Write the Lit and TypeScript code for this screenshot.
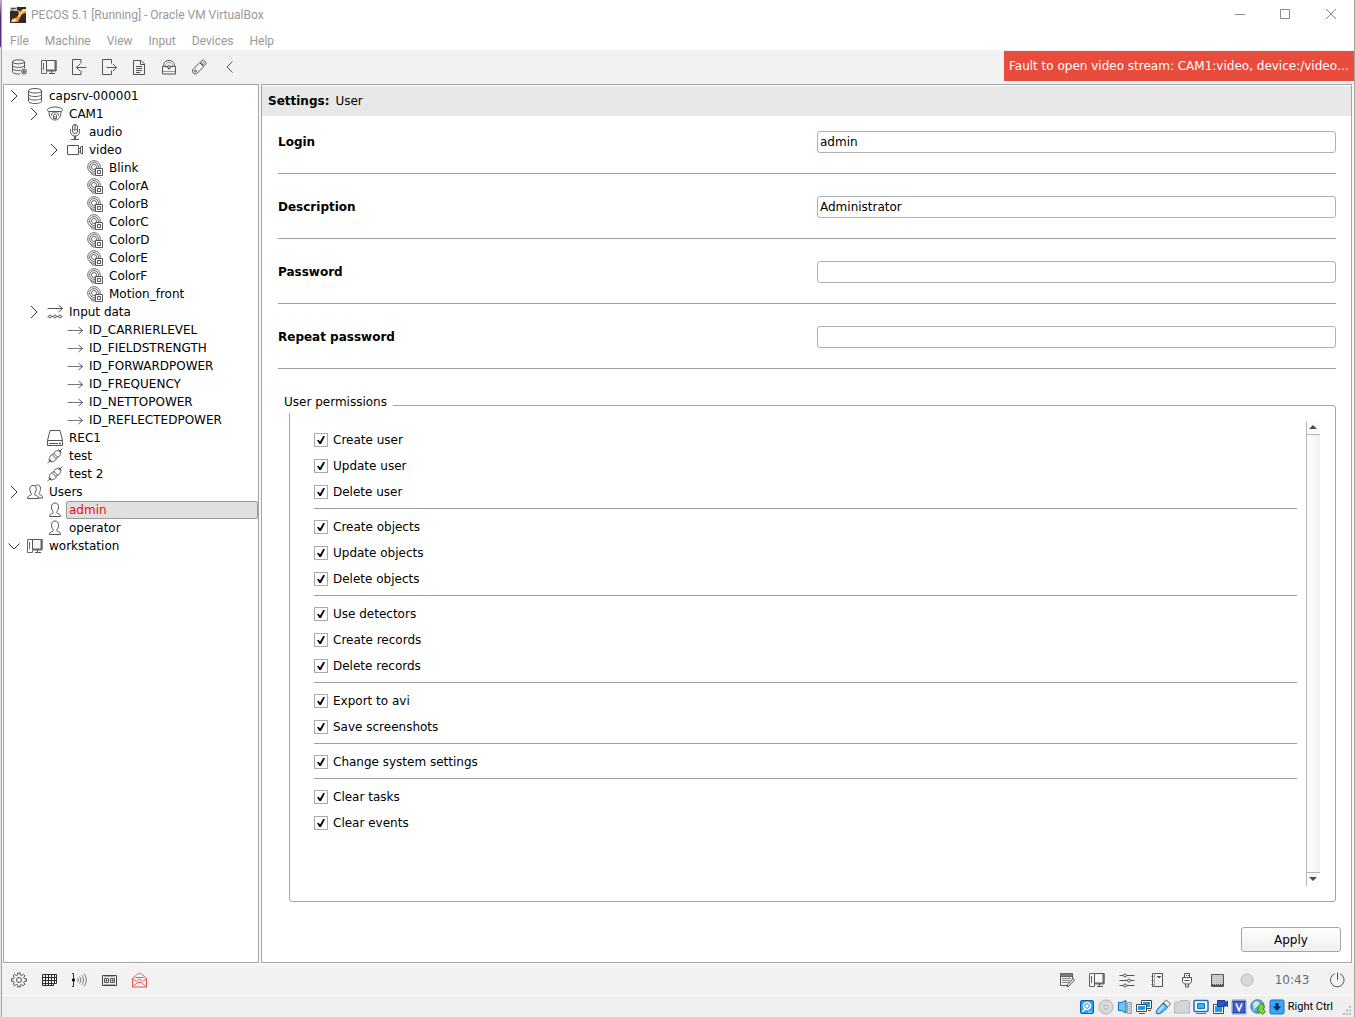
import { LitElement, html, svg, css } from "lit";
import { customElement, property } from "lit/decorators.js";

const ICONS: Record<string, unknown> = {
  server: svg`<ellipse cx="8" cy="2.800" rx="6.500" ry="2.300"/><path d="M1.500 2.800v10.400c0 1.400 2.900 2.300 6.500 2.300s6.500-.9 6.500-2.300V2.800M1.500 6.200C1.500 7.600 4.400 8.500 8 8.500s6.500-.9 6.500-2.300M1.500 9.700C1.500 11.100 4.400 12 8 12s6.500-.9 6.500-2.300"/>`,
  serverAdd: svg`<ellipse cx="7.500" cy="2.800" rx="6" ry="2"/><path d="M1.500 2.800v10c0 1.300 2.500 2.200 6 2.200h1.500M13.500 3v6M1.500 6.200c0 1.300 2.700 2.200 6 2.200s6-.9 6-2.200M1.500 9.400c0 1.300 2.700 2.200 6 2.200h2"/><circle cx="13" cy="12.500" r="2.500"/><circle cx="13" cy="12.500" r="1" fill="#888"/>`,
  station: svg`<path d="M5.500 1.500h-5v13h5v-2M2.500 4v7" stroke="#666"/><path d="M5.500 1.500h9.500v10H5.500z" fill="#f6f6f6"/><path d="M14.500 1v11M5 11.500h10" stroke="#666" stroke-width="2"/><path d="M10.500 12v2.500M8 14.500h6"/>`,
  login: svg`<path d="M10 4.500v-4H1.500v15H10v-4M15.500 8.500H5.500M9 5L5.500 8.500 9 12"/>`,
  logout: svg`<path d="M10.500 4.500v-4h-9v15h9v-4M5.500 8.500h10M12 5l3.500 3.500L12 12"/>`,
  page: svg`<path d="M2.500 1.500H10l3.500 3.500v10.500h-11zM9.500 1.500v4h4M5 7.500h6M5 9.500h6M5 11.500h6M5 13.500h4"/>`,
  lock: svg`<path d="M2.500 7C2.500 3 5 1.500 8 1.500S13.500 3 13.500 7M1.500 7.500h13v7.500h-13z"/><path d="M4.500 7C4.500 4.500 6 3.500 8 3.500s3.500 1 3.500 3.500M2 12.500h12" stroke="#999"/><circle cx="8" cy="8" r="1.500" fill="#fff"/><path d="M8 8v2.500"/>`,
  usb: svg`<path d="M8.700 3.700l4 4-6.200 6.300c-1.300 1.300-3.300 1-4.200 0s-1.200-2.800 0-4zM9.500 3l2-2c1-.5 3.500 2 3.700 3.500l-2.200 2.200z"/><circle cx="4.500" cy="12" r="1"/><path d="M12 3l1.500 1.500M10.500 4.500l1.500 1.500"/>`,
  back: svg`<path d="M11.500 2.500L6 8l5.500 5.500"/>`,
  dome: svg`<path d="M.5 3.500C2 1.500 5 1 8 1s6 .5 7.500 2.500c0 1.200-.5 2-1.500 2H2c-1 0-1.500-.8-1.500-2zM2 5.500c0 5 2 8.500 6 8.500s6-3.500 6-8.500"/><path d="M4.500 9.500C4.500 7 6 6 8 6s3.500 1 3.500 3.500M6.500 12.500v-3c0-2 3-2 3 0v3zM8 10v1.500"/>`,
  mic: svg`<rect x="5.500" y=".5" width="5" height="9" rx="2.500"/><path d="M8 1v6M3.500 5v2.500c0 3 1.800 4.500 4.500 4.500s4.500-1.500 4.500-4.500V5M7.500 12v3M8.500 12v3M4 15.500h8"/><path d="M5.500 5.500h5" stroke="#888"/>`,
  camera: svg`<path d="M.5 3.500h11v9H.5zM11.500 7l2-1M11.500 9.500l2 1M13.500 5l2-1v8l-2-1z"/>`,
  detector: svg`<g stroke="#666"><circle cx="7" cy="7" r="6.300"/><circle cx="7" cy="7" r="4.400"/><circle cx="7" cy="7" r="2.500"/><path d="M3 11.500l2.500 3.500h3"/></g><path d="M8.500 8.500h7v7h-7z" fill="#fff"/><path d="M10.500 10.500h3v3h-3z"/>`,
  inputs: svg`<path d="M.5 4.500h15M11.500 1l4 3.500-4 3.500"/><circle cx="3" cy="12.500" r="1.400"/><circle cx="8" cy="12.500" r="1.400"/><circle cx="13" cy="12.500" r="1.400"/><path d="M.5 12.500h1M4.500 12.500h2M9.500 12.500h2M14.500 12.500h1"/>`,
  arrow: svg`<path d="M.5 8.500h15" stroke="#777"/><path d="M11.500 5l4 3.500-4 3.500"/>`,
  drive: svg`<path d="M3 .5h10l2.500 10v5H.5v-5zM.5 10.500h15M2 13.500h9"/><path d="M12 13.500h2" stroke-width="1.500"/>`,
  plug: svg`<path d="M.5 15l3-2.500M12.500 3.500l3-3M3.500 12.500c-2-2.500-.5-4.500 1.500-6l4.500 4.500c-2 2.500-4 3.500-6 1.500zM12.500 3.500c2 2.500.5 4-1.500 6L6.500 5c2-2 4-3.500 6-1.500zM5.500 7l2-2M9 10.500l2-2M11.500 1.500l3 3M1.500 11.500l3 3"/>`,
  users: svg`<path d="M.5 14.500c0-2.800 1.500-2.500 3.500-3.500.6-.4.500-1.200 0-1.900C3 7.500 2.800 6.500 2.800 4.800 2.800 2.500 4.200 1.500 6 1.500s3.200 1 3.200 3.300c0 1.700-.2 2.700-1.200 4.300-.5.700-.6 1.500 0 1.900 2 1 3.500.7 3.500 3.500z"/><path d="M8 2.200c.7-.8 1.500-1.200 2.500-1.200 1.800 0 3 1.200 3 3.300 0 1.700-.2 2.700-1.200 4.300-.5.700-.4 1.500.2 1.900 1.800.8 3 .7 3 3.500H12"/>`,
  user: svg`<path d="M2.500 14.500c0-2.500 1.200-2.200 3.400-3.300.6-.4.500-1.200 0-1.900C4.700 7.700 4.500 6.500 4.500 4.800c0-2.500 1.500-3.800 3.500-3.800s3.500 1.300 3.500 3.800c0 1.700-.2 2.900-1.400 4.500-.5.700-.6 1.500 0 1.900 2.200 1.100 3.400.8 3.400 3.300z"/>`,
  gear: svg`<path d="M6.700 1h2.600v2l1.500.6 1.500-1.400 1.700 1.800-1.300 1.400.6 1.300H15.500v2.600h-2.200l-.6 1.300 1.300 1.500-1.700 1.700-1.500-1.300-1.500.6V15H6.700v-1.900l-1.500-.6-1.500 1.300L2 12.100l1.300-1.500-.6-1.300H.5V6.700h2.200l.6-1.300L2 4l1.700-1.800 1.500 1.400L6.700 3z"/><circle cx="8" cy="8" r="2.500"/>`,
  grid: svg`<path d="M1.500 2.500h14v9h-3v2h-11zM1.500 5.500h14M1.500 8.500h14M1.500 11.500h11M4.500 2.500v11M7.500 2.500v11M10.500 2.500v11M13.500 2.500v9" stroke="#2c2c2c"/>`,
  sound: svg`<path d="M1 1.500h1.500v13H1" stroke="#333"/><path d="M1.500 7h2v2h-2z" fill="#111" stroke="#111"/><g stroke="#777"><path d="M6.500 5.800c1 1.400 1 3 0 4.400M8.500 4.500c1.700 2.200 1.700 4.800 0 7M10.800 3.200c2.200 3 2.200 6.600 0 9.600M13 2c3 3.700 3 8.300 0 12"/></g>`,
  tape: svg`<path d="M1.500 3.500h14v10h-14z" stroke="#444"/><path d="M3 4.500h11M3 12.500h11" stroke="#aaa"/><path d="M3.500 6.500h4v4h-4zM9.500 6.500h4v4h-4z"/><path d="M5 8h1v1H5zM11 8h1v1h-1z" stroke="#333"/>`,
  mail: svg`<g stroke="#ea5550"><path d="M1.500 6.500l5-4.500c1.300-1 2.700-1 4 0l5 4.500v8.500h-14zM1.500 6.500l4 3M15.500 6.500l-4 3M1.500 15l5-4.500h4l5 4.500M4.500 5.500h8M6 9l2.500-2L11 9"/></g>`,
  notes: svg`<path d="M9 13.500H1.500v-12h12v5M1.500 4.500h12"/><path d="M3 6.500h9M3 8.500h8M3 10.500h7" stroke="#888"/><path d="M2 2h11v2H2z" fill="#888" stroke="#777"/><path d="M14 6.500l1.500 1.500-5.500 6-2 .8.600-2z"/>`,
  sliders: svg`<path d="M.5 3.500h4M7.500 3.500h8M.5 8.500h8M11.500 8.500h4M.5 13.500h4M7.500 13.500h8"/><circle cx="6" cy="3.500" r="1.500"/><circle cx="10" cy="8.500" r="1.500"/><circle cx="6" cy="13.500" r="1.500"/>`,
  book: svg`<path d="M3.500 1.500h10v13h-10z"/><path d="M5.500 1.500v13" stroke="#aaa"/><path d="M2.500 4.500h2M2.500 8.500h2M2.500 12.500h2M8 4.500h4M9 5.500h2"/>`,
  port: svg`<path d="M5.500 5.500v-4h5v4M7.500 3v1M9.500 3v1M3.500 5.500h9v4c0 1.500-1.500 2-2.500 2.500H6c-1-.5-2.500-1-2.500-2.500zM6.500 12v3h3v-3M5.500 8.500h5"/>`,
  matte: svg`<path d="M2.500 2.500h12v12h-12z" fill="#d0d0d0" stroke="#555"/><path d="M3 4.500h11M3 6.500h11M3 8.500h11M3 10.500h11" stroke="#bbb" stroke-dasharray="1 1"/><path d="M3 12.500h11" stroke="#444" stroke-dasharray="1 1"/><path d="M3 13.500h11" stroke="#555"/>`,
  dot: svg`<circle cx="8" cy="8" r="6" fill="#d8d8d8" stroke="#b8b8b8"/>`,
  power: svg`<path d="M5.500 1.800a6.800 6.800 0 1 0 5.500 0M8.500.5V8"/>`,
  vmDisk: svg`<rect x="1.500" y="1.500" width="13" height="13" rx="1.500" fill="#2a9df0" stroke="#0b5fae"/><circle cx="8" cy="7" r="4.300" fill="#fff" stroke="none"/><circle cx="8" cy="7" r="2.300" fill="#fff" stroke="#1c83d8"/><path d="M3.500 12.800L7 9" stroke="#fff" stroke-width="1.500"/><path d="M9 13h4" stroke="#cfeaff"/>`,
  vmDisc: svg`<circle cx="8" cy="8" r="7" fill="#dadada" stroke="#b2b2b2"/><circle cx="8" cy="8" r="2" fill="#eee" stroke="#aaa"/>`,
  vmAudio: svg`<path d="M1.500 3.500h3l4.500-2v12.500l-4.500-2.500h-3z" fill="#6cc6f8" stroke="#0f6cb8"/><path d="M10.500 3.500h4v11h-4z" fill="#d0d6da" stroke="#98a2a8"/><path d="M12.500 5v8" stroke="#98a2a8" stroke-dasharray="1 1"/>`,
  vmNet: svg`<path d="M5.500 1.500h10v8h-10z" fill="#fff" stroke="#444"/><path d="M7 3h7v5H7z" fill="#1a9af0" stroke="none"/><path d="M.5 5.500h10v7H.5z" fill="#fff" stroke="#444"/><path d="M2 7h7v4H2z" fill="#1a9af0" stroke="none"/><path d="M3 14.500h6M12 11.500h3" stroke="#555"/>`,
  vmUsb: svg`<path d="M1.500 14.500c-1-2 .5-4 2.500-6l4-4.500 4.500 4.500-4.500 4c-2 2-5 3-6.500 2z" fill="#66c0f8" stroke="#0f6cb8"/><path d="M3 13l5.500-6" stroke="#c8ebff" stroke-width="1.500"/><path d="M8.500 3.500l3-2.500L15.500 5l-3 3z" fill="#eee" stroke="#666"/>`,
  vmFolder: svg`<path d="M.5 4.500l1-1.500h4l1-1.500h7.500l1.500 1.500v11H.5z" fill="#d6d6d6" stroke="#b6b6b6"/>`,
  vmDisplay: svg`<rect x="1" y="1.500" width="14" height="11" rx="1" fill="#fff" stroke="#1273c4" stroke-width="1.500"/><path d="M4.500 4.500h7v5h-7z" fill="#3cb0f5" stroke="#1273c4"/><path d="M3 14.500h10" stroke="#4a7a9a"/>`,
  vmRecord: svg`<path d="M1.500 5.500h10v9h-10z" fill="#fff" stroke="#444"/><path d="M3 7h7v6H3z" fill="#1a9af0" stroke="none"/><path d="M5.500 1.500h7.500v6H5.500zM13 4l2.500-2v5.500L13 6" fill="#2e56c0" stroke="#1d3f98"/>`,
  vmCpu: svg`<rect x="1.500" y="1.500" width="13" height="13" fill="none" stroke="#2442a8" stroke-width="2" stroke-dasharray="1 1"/><rect x="2.500" y="2.500" width="11" height="11" fill="#3f62d4" stroke="#2442a8"/><path d="M5 4.500l3 7 3-7" stroke="#fff" stroke-width="1.600"/>`,
  vmMouse: svg`<circle cx="7.500" cy="7.500" r="6.800" fill="#3ba7ef" stroke="#5f7f98"/><path d="M3 5c2-3 5-3 6-1s-1 3-3 4-2 4-2 4" fill="#c9e9fb" stroke="#c9e9fb"/><path d="M8.500 7l3-3 3 4-1.500 1.500 2.500 3-3 3-3-3L8 14z" fill="#7ad431" stroke="#3f8c1c"/>`,
  vmKey: svg`<rect x="1" y="1" width="14" height="14" rx="1.500" fill="#3aa8f4" stroke="#1273c4"/><path d="M8 4v4" stroke="#04284e" stroke-width="3"/><path d="M4 7.500h8L8 12z" fill="#04284e" stroke="none"/>`,
};

@customElement("ui-icon")
export class UiIcon extends LitElement {
  static styles = css`
    :host { display: block; width: 16px; height: 16px; flex: none; }
    .glyph { display: block; width: 16px; height: 16px; fill: none; stroke: #555; stroke-width: 1; }
  `;
  @property() name = "";
  render() {
    return html`<svg class="glyph" viewBox="0 0 16 16" aria-hidden="true">${ICONS[this.name]}</svg>`;
  }
}

interface TreeNode { level: number; icon: string; label: string; toggle?: "closed" | "open"; selected?: boolean; }

const leaf = (level: number, icon: string, labels: string[]): TreeNode[] =>
  labels.map((label) => ({ level, icon, label }));

const TREE: TreeNode[] = [
  { level: 0, icon: "server", label: "capsrv-000001", toggle: "closed" },
  { level: 1, icon: "dome", label: "CAM1", toggle: "closed" },
  { level: 2, icon: "mic", label: "audio" },
  { level: 2, icon: "camera", label: "video", toggle: "closed" },
  ...leaf(3, "detector", ["Blink", "ColorA", "ColorB", "ColorC", "ColorD", "ColorE", "ColorF", "Motion_front"]),
  { level: 1, icon: "inputs", label: "Input data", toggle: "closed" },
  ...leaf(2, "arrow", ["ID_CARRIERLEVEL", "ID_FIELDSTRENGTH", "ID_FORWARDPOWER", "ID_FREQUENCY", "ID_NETTOPOWER", "ID_REFLECTEDPOWER"]),
  { level: 1, icon: "drive", label: "REC1" },
  ...leaf(1, "plug", ["test", "test 2"]),
  { level: 0, icon: "users", label: "Users", toggle: "closed" },
  { level: 1, icon: "user", label: "admin", selected: true },
  { level: 1, icon: "user", label: "operator" },
  { level: 0, icon: "station", label: "workstation", toggle: "open" },
];

const FIELDS = [
  { id: "login", label: "Login", value: "admin", type: "text" },
  { id: "description", label: "Description", value: "Administrator", type: "text" },
  { id: "password", label: "Password", value: "", type: "password" },
  { id: "repeat", label: "Repeat password", value: "", type: "password" },
];

const PERMISSIONS = [
  ["Create user", "Update user", "Delete user"],
  ["Create objects", "Update objects", "Delete objects"],
  ["Use detectors", "Create records", "Delete records"],
  ["Export to avi", "Save screenshots"],
  ["Change system settings"],
  ["Clear tasks", "Clear events"],
];

const MENUS = ["File", "Machine", "View", "Input", "Devices", "Help"];
const TOOLS = [
  ["serverAdd", "Add server"], ["station", "Workstation"], ["login", "Log in"], ["logout", "Log out"],
  ["page", "Log"], ["lock", "Lock"], ["usb", "Removable drive"], ["back", "Collapse"],
];
const BOTTOM_LEFT = [["gear", "Settings"], ["grid", "Layout"], ["sound", "Audio"], ["tape", "Records"], ["mail", "Events"]];
const BOTTOM_RIGHT = [
  ["notes", "Tasks"], ["station", "Displays"], ["sliders", "Adjust"], ["book", "Journal"],
  ["port", "Devices"], ["matte", "Keyboard"], ["dot", "Status"],
];
const VM_ICONS = ["vmDisk", "vmDisc", "vmAudio", "vmNet", "vmUsb", "vmFolder", "vmDisplay", "vmRecord", "vmCpu", "vmMouse", "vmKey"];

@customElement("object-tree")
export class ObjectTree extends LitElement {
  static styles = css`
    :host { display: block; box-sizing: border-box; border: 1px solid #a5a5a5; background: #fff; padding-top: 2px; }
    .row { display: flex; align-items: center; height: 18px; }
    .toggle { display: grid; place-items: center; width: 20px; height: 18px; margin-right: 3px; padding: 0; border: 0; background: none; flex: none; }
    .chevron { width: 12px; height: 14px; fill: none; stroke: #333; }
    .label { box-sizing: border-box; flex: 1; height: 18px; line-height: 16px; margin-left: 3px; padding-left: 2px; border: 1px solid transparent; white-space: nowrap; }
    .selected .label { background: #e0e0e0; border-color: #999; border-radius: 2px; color: #e80c10; }
  `;
  render() {
    return html`<div role="tree" aria-label="Objects">
      ${TREE.map((n) => html`
        <div class="row ${n.selected ? "selected" : ""}" role="treeitem" aria-level=${n.level + 1}
          aria-selected=${n.selected ? "true" : "false"} style="padding-left:${n.level * 20}px">
          ${n.toggle
            ? html`<button class="toggle" aria-label="Toggle ${n.label}">
                <svg class="chevron" viewBox="0 0 12 14">
                  <path d=${n.toggle === "open" ? "M.5 4.500L6 10l5.500-5.500" : "M3 1L9 7l-6 6"} /></svg></button>`
            : html`<span class="toggle"></span>`}
          <ui-icon name=${n.icon}></ui-icon>
          <span class="label">${n.label}</span>
        </div>`)}
    </div>`;
  }
}

@customElement("user-settings")
export class UserSettings extends LitElement {
  static styles = css`
    :host { display: flex; flex-direction: column; box-sizing: border-box; border: 1px solid #a5a5a5; background: #fff; min-width: 0; }
    .heading { display: flex; gap: 6px; margin: 1px 0 0; padding-left: 6px; line-height: 30px; background: #e8e8e8; font-size: 12px; font-weight: normal; }
    .body { display: flex; flex-direction: column; flex: 1; padding: 15px 15px 25px 16px; }
    .field { display: grid; grid-template-columns: 1fr 1fr; column-gap: 20px; align-items: center; padding-bottom: 20px; border-bottom: 1px solid #a0a0a0; }
    .field + .field { margin-top: 22px; }
    .name { font-weight: bold; }
    .text { box-sizing: border-box; width: 100%; height: 22px; margin: 0; padding: 0 2px; border: 1px solid #b0b0b0; border-radius: 3px; background: #fff; font: inherit; color: #000; outline: none; }
    .perms { display: flex; flex-direction: column; flex: 1; margin: 28px 0 0 11px; padding: 8px 15px 15px 24px; border: 1px solid #a5a5a5; border-radius: 3px; min-width: 0; }
    .legend { margin-left: -30px; padding: 0 6px 6px 0; line-height: 10px; background: #fff; }
    .area { display: flex; flex: 1; gap: 9px; }
    .list { flex: 1; padding-top: 6px; }
    .group { padding-bottom: 3px; border-bottom: 1px solid #a0a0a0; margin-bottom: 5px; }
    .group:last-child { border: 0; margin: 0; }
    .perm { display: flex; align-items: center; gap: 5px; height: 26px; width: max-content; }
    .check { appearance: none; display: grid; place-items: center; box-sizing: border-box; width: 14px; height: 14px; margin: 0; border: 1px solid #aaa; background: #fff; }
    .check:checked::before { content: ""; width: 8px; height: 8px; background: #000; clip-path: polygon(0 52%, 18% 46%, 38% 70%, 78% 0, 100% 4%, 50% 100%, 30% 100%); }
    .scroll { display: flex; flex-direction: column; justify-content: space-between; width: 14px; box-sizing: border-box; border-left: 1px solid #b4b4b4; background: linear-gradient(90deg, #fff, #f0f0f0); }
    .step { display: grid; place-items: center; height: 14px; padding: 0; border: 0 solid #b4b4b4; background: #fbfbfb; }
    .up { border-bottom-width: 1px; }
    .down { border-top-width: 1px; }
    .tri { width: 9px; height: 5px; fill: #4c4c4c; }
    .actions { display: flex; justify-content: flex-end; padding: 0 10px 10px; }
    .apply { width: 100px; height: 25px; padding: 0; border: 1px solid #a5a5a5; border-radius: 3px; background: linear-gradient(#fff, #efefef); font: inherit; color: #000; }
  `;
  render() {
    return html`
      <h1 class="heading"><b>Settings:</b><span>User</span></h1>
      <form class="body" @submit=${(e: Event) => e.preventDefault()}>
        ${FIELDS.map((f) => html`<div class="field">
          <label class="name" for=${f.id}>${f.label}</label>
          <input class="text" id=${f.id} type=${f.type} .value=${f.value} autocomplete="off" />
        </div>`)}
        <fieldset class="perms">
          <legend class="legend">User permissions</legend>
          <div class="area">
            <div class="list">
              ${PERMISSIONS.map((g) => html`<div class="group">
                ${g.map((p) => html`<label class="perm"><input class="check" type="checkbox" checked />${p}</label>`)}
              </div>`)}
            </div>
            <div class="scroll">
              <button class="step up" type="button" aria-label="Scroll up"><svg class="tri" viewBox="0 0 9 5"><path d="M0 4l4-4 4 4z"/></svg></button>
              <button class="step down" type="button" aria-label="Scroll down"><svg class="tri" viewBox="0 0 9 5"><path d="M0 0l4 4 4-4z"/></svg></button>
            </div>
          </div>
        </fieldset>
      </form>
      <div class="actions"><button class="apply" type="button">Apply</button></div>`;
  }
}

@customElement("app-root")
export class AppRoot extends LitElement {
  static styles = css`
    :host { display: block; font: 12px/16px "DejaVu Sans", sans-serif; color: #000; background: linear-gradient(#c8b8d8 0, #5a2780 16px, #5a2780 46px, #e4e4ea 48px, #e4e4ea 100%); padding-left: 1px; }
    .window { display: flex; flex-direction: column; box-sizing: border-box; min-height: 100vh; border: solid #a5a5a5; border-width: 0 1px; background: #f8f8f8; }
    .title { display: flex; align-items: center; height: 29px; padding-left: 8px; background: #fff; font: 12px/16px Roboto, sans-serif; color: #999; }
    .logo { width: 16px; height: 16px; margin-right: 5px; }
    .caption { flex: 1; }
    .control { display: grid; place-items: center; width: 46px; height: 28px; padding: 0; border: 0; background: none; }
    .mark { width: 12px; height: 12px; fill: none; stroke: #8a8a8a; }
    .menu { display: flex; align-items: flex-end; gap: 16px; height: 21px; padding-left: 8px; background: #fff; }
    .item { padding: 0; border: 0; background: none; font: 12px/18px Roboto, sans-serif; color: #999; }
    .toolbar { display: flex; justify-content: space-between; align-items: flex-start; height: 33px; padding: 1px 0 0 2px; background: #f2f2f2; }
    .tools { display: flex; }
    .toolbar .tools { padding-top: 1px; }
    .tool { display: grid; place-items: center; width: 30px; height: 30px; padding: 0; border: 0; background: none; }
    .fault { box-sizing: border-box; width: 350px; height: 30px; padding: 0 5px; line-height: 30px; background: #e84c3d; color: #fff; white-space: nowrap; }
    .main { display: grid; grid-template-columns: 256px 1fr; gap: 2px; flex: 1; padding: 0 2px 2px 1px; }
    .bottom { display: flex; justify-content: space-between; height: 30px; padding: 0 0 0 2px; background: #f2f2f2; border-bottom: 1px solid #fff; }
    .clock { width: 60px; line-height: 30px; text-align: center; color: #6c6c6c; }
    .status { display: flex; align-items: center; justify-content: flex-end; gap: 3px; height: 21px; background: #efefef; font: 11px/16px Roboto, sans-serif; }
    .grip { width: 10px; height: 10px; margin: 8px 2px 0 6px; fill: #bbb; }
    .end { padding-right: 2px; }
  `;

  private tools(list: string[][]) {
    return list.map(([icon, label]) => html`<button class="tool" aria-label=${label}><ui-icon name=${icon}></ui-icon></button>`);
  }

  render() {
    return html`<div class="window">
      <header class="title">
        <svg class="logo" viewBox="0 0 16 16" aria-hidden="true">
          <rect width="16" height="16" fill="#2c2a2c"/><path d="M0 0h7v4H0z" fill="#ccc"/><path d="M1 1.500h5M1 3h3" stroke="#555"/>
          <path d="M7 3h2l1.500 2L13 2h3v4l-4 1.500L10 11l-2 4H1l1-3 5-2 2-3z" fill="#f08a24"/>
          <path d="M10 5l3-3h3v2l-3.500 1.500L9 10H7.500zM1 15l2-3h4l-2 3z" fill="#ffd68a"/>
        </svg>
        <span class="caption">PECOS 5.1 [Running] - Oracle VM VirtualBox</span>
        <button class="control" aria-label="Minimize"><svg class="mark" viewBox="0 0 12 12"><path d="M2 5.500h10"/></svg></button>
        <button class="control" aria-label="Maximize"><svg class="mark" viewBox="0 0 12 12"><path d="M1.500.5h9v9h-9z"/></svg></button>
        <button class="control" aria-label="Close"><svg class="mark" viewBox="0 0 12 12"><path d="M1 0l10 10M11 0L1 10"/></svg></button>
      </header>
      <nav class="menu">${MENUS.map((m) => html`<button class="item">${m}</button>`)}</nav>
      <div class="toolbar">
        <div class="tools">${this.tools(TOOLS)}</div>
        <div class="fault" role="alert">Fault to open video stream: CAM1:video, device:/video…</div>
      </div>
      <main class="main">
        <object-tree></object-tree>
        <user-settings></user-settings>
      </main>
      <div class="bottom">
        <div class="tools">${this.tools(BOTTOM_LEFT)}</div>
        <div class="tools end">
          ${this.tools(BOTTOM_RIGHT)}
          <time class="clock">10:43</time>
          ${this.tools([["power", "Power"]])}
        </div>
      </div>
      <footer class="status">
        ${VM_ICONS.map((i) => html`<ui-icon name=${i}></ui-icon>`)}
        <span>Right Ctrl</span>
        <svg class="grip" viewBox="0 0 10 10" aria-hidden="true"><path d="M7 0h2v2H7zM4 3.500h2v2H4zM7 3.500h2v2H7zM1 7h2v2H1zM4 7h2v2H4zM7 7h2v2H7z"/></svg>
      </footer>
    </div>`;
  }
}
